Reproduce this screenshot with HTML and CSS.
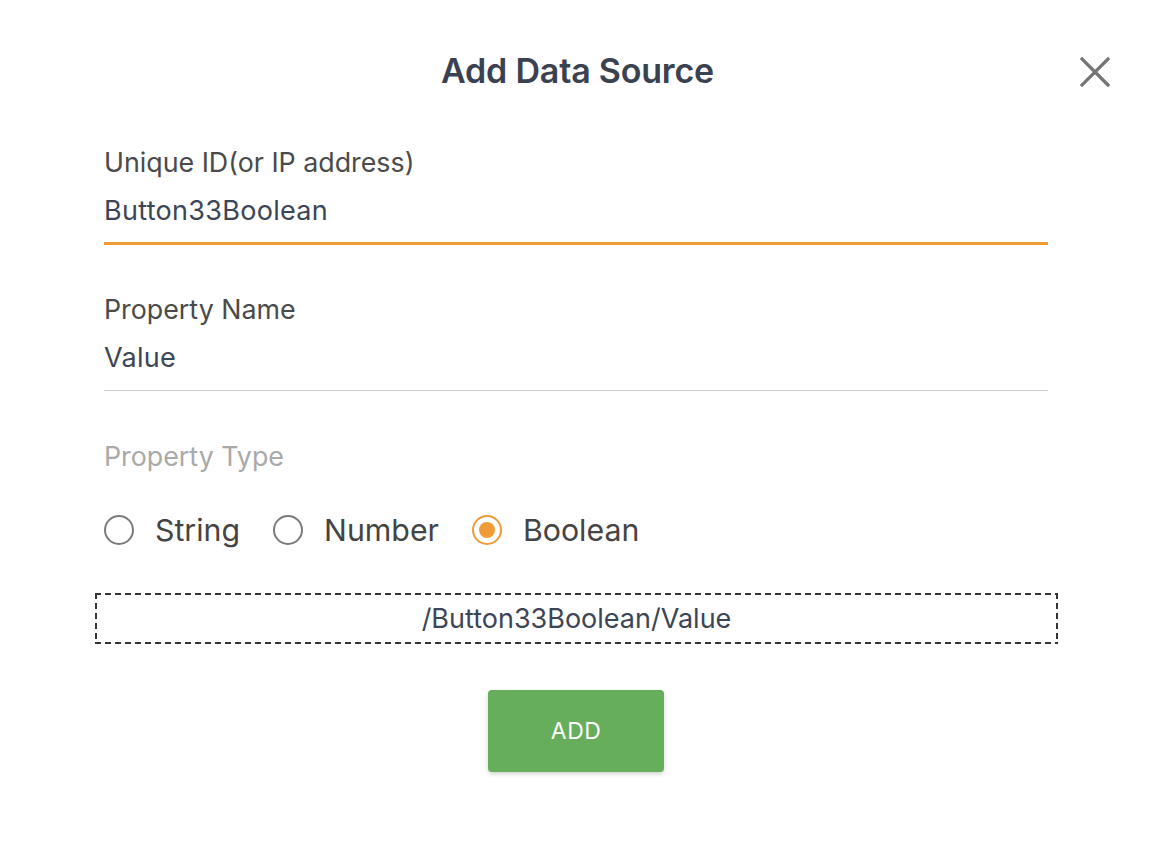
FILE: index.html
```html
<!DOCTYPE html>
<html>
<head>
<meta charset="utf-8">
<link rel="stylesheet" href="styles.css">
</head>
<body>
<div class="dialog">
  <header class="head">
    <h1 class="title">Add Data Source</h1>
    <button class="close" aria-label="close">
      <svg width="32" height="32" viewBox="0 0 32 32"><path d="M3 3 L29 29 M29 3 L3 29" stroke="#757575" stroke-width="3.2" stroke-linecap="square"/></svg>
    </button>
  </header>
  <div class="form">
    <div class="field focused">
      <div class="label">Unique ID(or IP address)</div>
      <div class="value">Button33Boolean</div>
    </div>
    <div class="field">
      <div class="label">Property Name</div>
      <div class="value">Value</div>
    </div>
    <div class="ptype">Property Type</div>
    <div class="radios">
      <label class="radio"><span class="circle"></span>String</label>
      <label class="radio"><span class="circle"></span>Number</label>
      <label class="radio checked"><span class="circle"><span class="dot"></span></span>Boolean</label>
    </div>
  </div>
  <div class="path">/Button33Boolean/Value</div>
  <div class="actions"><button class="add">ADD</button></div>
</div>
</body>
</html>
```
FILE: styles.css
```css
html, body { margin: 0; padding: 0; background: #fff; }
body { font-family: Inter, "Liberation Sans", sans-serif; color: #3c4250; }
.dialog { width: 1155px; height: 856px; box-sizing: border-box; padding-top: 48px; }
.head { position: relative; display: flex; justify-content: center; height: 46px; }
.title { margin: 0; font-family: Inter, sans-serif; font-weight: 600; font-size: 34px; line-height: 46px; color: #3a4150; letter-spacing: -0.2px; }
.close { position: absolute; right: 44px; top: 8px; border: 0; background: none; padding: 0; width: 32px; height: 32px; }
.form { padding: 0 107px 0 104px; margin-top: 51px; }
.field { border-bottom: 1px solid #cfcfcf; padding-bottom: 15px; margin-bottom: 47px; }
.field.focused { border-bottom: 3px solid #f09b38; padding-bottom: 14px; }
.label { font-size: 26.8px; line-height: 34px; color: #4a4a4a; }
.value { font-size: 27px; line-height: 34px; margin-top: 15px; color: #3c4556; letter-spacing: 0.3px; }
.ptype { font-size: 26.8px; line-height: 34px; color: #a9a9a9; margin-top: 48px; }
.radios { display: flex; gap: 33px; margin-top: 37px; height: 40px; align-items: center; }
.radio { display: flex; align-items: center; font-size: 30.3px; color: #444; gap: 21px; }
.circle { width: 26px; height: 26px; border: 2px solid #7a7a7a; border-radius: 50%; display: flex; align-items: center; justify-content: center; }
.checked .circle { border-color: #f09b38; }
.dot { width: 16px; height: 16px; border-radius: 50%; background: #f09b38; }
.path {
  margin: 43px 97px 0 95px; height: 51px; box-sizing: border-box;
  text-align: center; font-size: 27px; line-height: 51px; color: #3c4556;
  background:
    repeating-linear-gradient(90deg, #333 0 6px, transparent 6px 10px) left top / 100% 2px no-repeat,
    repeating-linear-gradient(90deg, #333 0 6px, transparent 6px 10px) left bottom / 100% 2px no-repeat,
    repeating-linear-gradient(180deg, #333 0 6px, transparent 6px 10px) left top / 2px 100% no-repeat,
    repeating-linear-gradient(180deg, #333 0 6px, transparent 6px 10px) right top / 2px 100% no-repeat;
}
.actions { display: flex; justify-content: center; margin-top: 46px; padding-right: 3px; }
.add { width: 176px; height: 82px; background: #66ad5c; color: #fff; border: 0; border-radius: 4px; font-family: Inter, sans-serif; font-size: 23px; letter-spacing: 0.4px; box-shadow: 0 2px 4px rgba(0,0,0,0.18); }
```
